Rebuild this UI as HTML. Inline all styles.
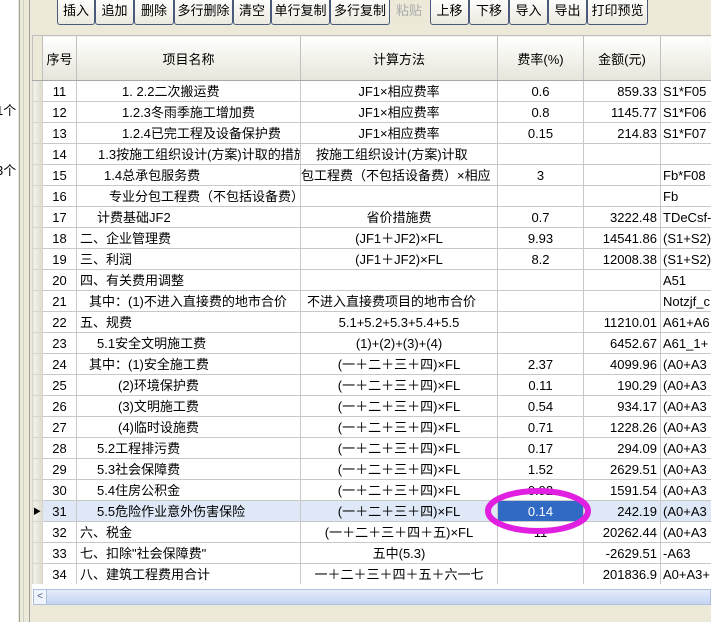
<!DOCTYPE html>
<html><head><meta charset="utf-8"><style>
*{margin:0;padding:0;box-sizing:border-box}
body{width:711px;height:622px;overflow:hidden;background:#ece9d8;font-family:"Liberation Sans","Noto Sans CJK SC",sans-serif;font-size:13px;color:#000;position:relative}
.left{position:absolute;left:0;top:0;width:18px;height:622px;background:#fff}
.vl{position:absolute;top:0;height:622px;width:1px;background:#a0a0a0}
.btn{position:absolute;top:0;height:25px;border:1px solid #4a5a7a;border-top:none;border-radius:0 0 3px 3px;background:linear-gradient(#fdfdfb,#ece9df);text-align:center;line-height:22px;font-size:13px}
.dis{color:#aaa;border-color:transparent;background:none}
table{position:absolute;left:32px;top:35px;width:688px;border-collapse:collapse;table-layout:fixed;background:#fff}
td{border:1px solid #c8c8c8;height:21px;white-space:nowrap;overflow:hidden;padding:0;line-height:19px}
th{height:45px;font-weight:normal;background:linear-gradient(#fff,#f0efe8 60%,#e6e4da);border:1px solid #c0c0c0;border-bottom:1px solid #a8a8a8;overflow:hidden;white-space:nowrap}
td.m{background:linear-gradient(90deg,#f4f3ee,#dedbcc);border-color:#d8d6c8}
.c{text-align:center}.r{text-align:right;padding-right:3px}.l{padding-left:2px}
tr.sel td{background:#dfe8f6}
tr.sel td.m{background:linear-gradient(90deg,#f4f3ee,#dedbcc)}
</style></head><body>
<div class="left"></div>
<div class="vl" style="left:19px"></div>
<div class="vl" style="left:23px;background:#d0d0c8"></div>
<div class="vl" style="left:29px"></div>
<div style="position:absolute;left:-4px;top:100px;font-size:13px">1个</div>
<div style="position:absolute;left:-4px;top:160px;font-size:13px">3个</div>

<div class="btn" style="left:57px;width:38px">插入</div>
<div class="btn" style="left:95px;width:39px">追加</div>
<div class="btn" style="left:134px;width:40px">删除</div>
<div class="btn" style="left:174px;width:59px">多行删除</div>
<div class="btn" style="left:233px;width:38px">清空</div>
<div class="btn" style="left:271px;width:59px">单行复制</div>
<div class="btn" style="left:330px;width:60px">多行复制</div>
<div class="btn dis" style="left:390px;width:38px">粘贴</div>
<div class="btn" style="left:430px;width:39px">上移</div>
<div class="btn" style="left:469px;width:40px">下移</div>
<div class="btn" style="left:509px;width:39px">导入</div>
<div class="btn" style="left:548px;width:39px">导出</div>
<div class="btn" style="left:587px;width:61px">打印预览</div>

<table>
<colgroup><col style="width:10px"><col style="width:34px"><col style="width:224px"><col style="width:197px"><col style="width:86px"><col style="width:77px"><col style="width:60px"></colgroup>
<tr><th style="background:#ece9d8"></th><th>序号</th><th>项目名称</th><th>计算方法</th><th>费率(%)</th><th>金额(元)</th><th></th></tr>
<tr><td class="m"></td><td class="c">11</td><td style="padding-left:45px">1. 2.2二次搬运费</td><td class="c">JF1×相应费率</td><td class="c">0.6</td><td class="r">859.33</td><td class="l">S1*F05</td></tr>
<tr><td class="m"></td><td class="c">12</td><td style="padding-left:45px">1.2.3冬雨季施工增加费</td><td class="c">JF1×相应费率</td><td class="c">0.8</td><td class="r">1145.77</td><td class="l">S1*F06</td></tr>
<tr><td class="m"></td><td class="c">13</td><td style="padding-left:45px">1.2.4已完工程及设备保护费</td><td class="c">JF1×相应费率</td><td class="c">0.15</td><td class="r">214.83</td><td class="l">S1*F07</td></tr>
<tr><td class="m"></td><td class="c">14</td><td style="padding-left:21px">1.3按施工组织设计(方案)计取的措施费</td><td style="padding-left:15px">按施工组织设计(方案)计取</td><td></td><td></td><td></td></tr>
<tr><td class="m"></td><td class="c">15</td><td style="padding-left:27px">1.4总承包服务费</td><td style="padding-left:0">包工程费（不包括设备费）×相应</td><td class="c">3</td><td></td><td class="l">Fb*F08</td></tr>
<tr><td class="m"></td><td class="c">16</td><td style="padding-left:32px">专业分包工程费（不包括设备费）</td><td></td><td></td><td></td><td class="l">Fb</td></tr>
<tr><td class="m"></td><td class="c">17</td><td style="padding-left:20px">计费基础JF2</td><td class="c">省价措施费</td><td class="c">0.7</td><td class="r">3222.48</td><td class="l">TDeCsf-</td></tr>
<tr><td class="m"></td><td class="c">18</td><td style="padding-left:3px">二、企业管理费</td><td class="c">(JF1＋JF2)×FL</td><td class="c">9.93</td><td class="r">14541.86</td><td class="l">(S1+S2)</td></tr>
<tr><td class="m"></td><td class="c">19</td><td style="padding-left:3px">三、利润</td><td class="c">(JF1＋JF2)×FL</td><td class="c">8.2</td><td class="r">12008.38</td><td class="l">(S1+S2)</td></tr>
<tr><td class="m"></td><td class="c">20</td><td style="padding-left:3px">四、有关费用调整</td><td></td><td></td><td></td><td class="l">A51</td></tr>
<tr><td class="m"></td><td class="c">21</td><td style="padding-left:12px">其中：(1)不进入直接费的地市合价</td><td style="padding-left:6px">不进入直接费项目的地市合价</td><td></td><td></td><td class="l">Notzjf_c</td></tr>
<tr><td class="m"></td><td class="c">22</td><td style="padding-left:3px">五、规费</td><td class="c">5.1+5.2+5.3+5.4+5.5</td><td></td><td class="r">11210.01</td><td class="l">A61+A6</td></tr>
<tr><td class="m"></td><td class="c">23</td><td style="padding-left:20px">5.1安全文明施工费</td><td class="c">(1)+(2)+(3)+(4)</td><td></td><td class="r">6452.67</td><td class="l">A61_1+</td></tr>
<tr><td class="m"></td><td class="c">24</td><td style="padding-left:12px">其中：(1)安全施工费</td><td class="c">(一＋二＋三＋四)×FL</td><td class="c">2.37</td><td class="r">4099.96</td><td class="l">(A0+A3</td></tr>
<tr><td class="m"></td><td class="c">25</td><td style="padding-left:41px">(2)环境保护费</td><td class="c">(一＋二＋三＋四)×FL</td><td class="c">0.11</td><td class="r">190.29</td><td class="l">(A0+A3</td></tr>
<tr><td class="m"></td><td class="c">26</td><td style="padding-left:41px">(3)文明施工费</td><td class="c">(一＋二＋三＋四)×FL</td><td class="c">0.54</td><td class="r">934.17</td><td class="l">(A0+A3</td></tr>
<tr><td class="m"></td><td class="c">27</td><td style="padding-left:41px">(4)临时设施费</td><td class="c">(一＋二＋三＋四)×FL</td><td class="c">0.71</td><td class="r">1228.26</td><td class="l">(A0+A3</td></tr>
<tr><td class="m"></td><td class="c">28</td><td style="padding-left:20px">5.2工程排污费</td><td class="c">(一＋二＋三＋四)×FL</td><td class="c">0.17</td><td class="r">294.09</td><td class="l">(A0+A3</td></tr>
<tr><td class="m"></td><td class="c">29</td><td style="padding-left:20px">5.3社会保障费</td><td class="c">(一＋二＋三＋四)×FL</td><td class="c">1.52</td><td class="r">2629.51</td><td class="l">(A0+A3</td></tr>
<tr><td class="m"></td><td class="c">30</td><td style="padding-left:20px">5.4住房公积金</td><td class="c">(一＋二＋三＋四)×FL</td><td class="c">0.92</td><td class="r">1591.54</td><td class="l">(A0+A3</td></tr>
<tr class="sel"><td class="m" style="font-size:8px">▶</td><td class="c">31</td><td style="padding-left:20px">5.5危险作业意外伤害保险</td><td class="c">(一＋二＋三＋四)×FL</td><td class="c" style="background:#316ac5;color:#fff;border:1px dotted #000">0.14</td><td class="r">242.19</td><td class="l">(A0+A3</td></tr>
<tr><td class="m"></td><td class="c">32</td><td style="padding-left:3px">六、税金</td><td class="c">(一＋二＋三＋四＋五)×FL</td><td class="c">11</td><td class="r">20262.44</td><td class="l">(A0+A3</td></tr>
<tr><td class="m"></td><td class="c">33</td><td style="padding-left:3px">七、扣除"社会保障费"</td><td class="c">五中(5.3)</td><td></td><td class="r">-2629.51</td><td class="l">-A63</td></tr>
<tr><td class="m"></td><td class="c">34</td><td style="padding-left:3px">八、建筑工程费用合计</td><td class="c">一＋二＋三＋四＋五＋六一七</td><td></td><td class="r">201836.9</td><td class="l">A0+A3+</td></tr>
</table>
<div style="position:absolute;left:32px;top:584px;width:679px;height:21px;background:#fff"></div>
<div style="position:absolute;left:33px;top:589px;width:678px;height:16px;background:linear-gradient(#e4ecfa,#c4d4f4);border:1px solid #b0c0e0"></div>
<div style="position:absolute;left:33px;top:589px;width:14px;height:16px;background:#f0f4fc;border:1px solid #b0c0e0;font-size:10px;line-height:14px;text-align:center;color:#4d6185">&lt;</div>
<svg style="position:absolute;left:0;top:0" width="711" height="622"><ellipse cx="538" cy="511" rx="50" ry="20" fill="none" stroke="#e01fe0" stroke-width="6"/></svg>
</body></html>
